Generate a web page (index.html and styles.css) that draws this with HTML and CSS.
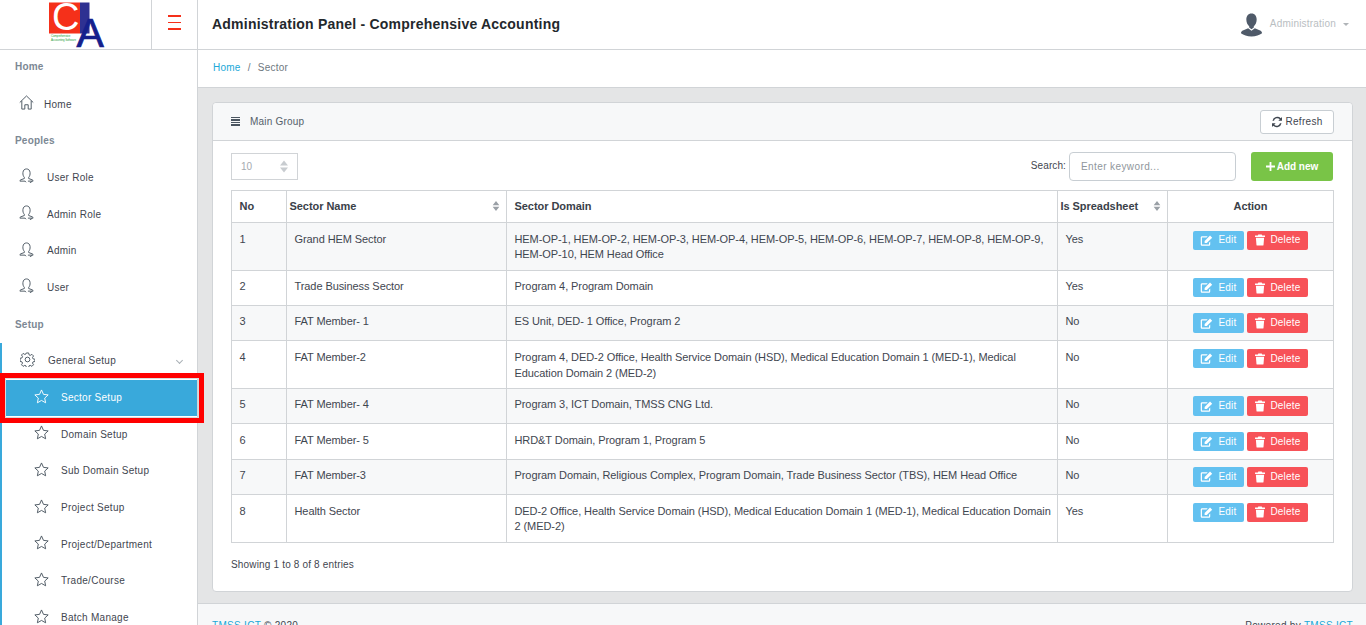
FILE: index.html
```html
<!DOCTYPE html>
<html lang="en">
<head>
  <meta charset="UTF-8" />
  <meta name="viewport" content="width=device-width, initial-scale=1.0" />
  <title>Administration Panel - Comprehensive Accounting</title>
  <link rel="stylesheet" href="styles.css">
</head>
<body>
  <svg class="sprites" width="0" height="0">
    <symbol id="i-home" viewBox="0 0 16 16"><path d="M.8 8 8 1l7.200 7M3 6.200V15h3.200v-4.600h3.600V15H13V6.200" fill="none" stroke="currentColor" stroke-width="1"/></symbol>
    <symbol id="i-user" viewBox="0 0 16 16"><path d="M5.700 10C4.500 8.700 4 7 4.200 4.800 4.400 2.300 6 1 8 1s3.600 1.300 3.800 3.800C12 7 11.500 8.700 10.300 10v1.200l4 1.500c.5.200.7.500.7 1.300H9.500M5.700 10v1.200l-4 1.500c-.5.200-.7.500-.7 1.300h5.500l1 1.200" fill="none" stroke="currentColor" stroke-width="1"/><path d="m11.500 15.800 2.500-1.500" fill="none" stroke="currentColor" stroke-width="1"/></symbol>
    <symbol id="i-gear" viewBox="0 0 16 16"><circle cx="8" cy="8" r="2.500" fill="none" stroke="currentColor"/><path d="M6.800 1h2.400l.4 2 1.300.6 1.800-1.100 1.700 1.700-1.100 1.800.6 1.300 2 .4v2.400l-2 .4-.6 1.300 1.100 1.800-1.700 1.700-1.800-1.100-1.300.6-.4 2H6.800l-.4-2-1.300-.6-1.800 1.100-1.700-1.700 1.100-1.800-.6-1.300-2-.4V6.700l2-.4.6-1.300-1.100-1.800 1.700-1.700 1.800 1.100 1.300-.6z" fill="none" stroke="currentColor"/></symbol>
    <symbol id="i-star" viewBox="0 0 16 16"><path d="m8 1 2.100 4.700 5 .6-3.700 3.400 1 5L8 12.200l-4.400 2.500 1-5L.9 6.300l5-.6z" fill="none" stroke="currentColor" stroke-width="1"/></symbol>
    <symbol id="i-edit" viewBox="0 0 14 14"><path d="M11 8v3.200c0 .9-.6 1.500-1.500 1.500H2.300c-.9 0-1.500-.6-1.500-1.500V4c0-.9.6-1.500 1.500-1.500h6L7 3.800H2.300l-.2.200v7.200l.2.200h7.200l.2-.2V9.300z" fill="currentColor"/><path d="M5 7.500 10.800 1.700l2.300 2.300-5.800 5.800H5z" fill="currentColor"/></symbol>
    <symbol id="i-trash" viewBox="0 0 14 14"><path d="M5 .5h4l.6 1.300h3.200v1.700H1.200V1.800h3.200zM2.200 4.500h9.600l-.7 8.200c0 .5-.4.8-.9.800H3.800c-.5 0-.9-.3-.9-.8z" fill="currentColor"/></symbol>
    <symbol id="i-refresh" viewBox="0 0 14 14"><path d="M12.800 1.200v4.200H8.600l1.600-1.600A4 4 0 0 0 3.500 5.500H1.700a5.800 5.800 0 0 1 9.700-3zM1.200 12.800V8.600h4.200l-1.600 1.600a4 4 0 0 0 6.700-1.700h1.800a5.800 5.800 0 0 1-9.700 3z" fill="currentColor"/></symbol>
    <symbol id="i-sort" viewBox="0 0 8 12"><path d="M4 0 8 5H0zM4 12 0 7h8z" fill="currentColor"/></symbol>
    <symbol id="i-plus" viewBox="0 0 10 10"><path d="M4 0h2v4h4v2H6v4H4V6H0V4h4z" fill="currentColor"/></symbol>
  </svg>

  <div class="app">
    <header class="topbar">
      <div class="brand">
        <svg class="logo" width="56" height="48" viewBox="0 0 56 48">
          <rect x="0" y="2.500" width="31" height="31" fill="#f5301a"/>
          <rect x="31" y="2.500" width="9.500" height="31" fill="#2e3192"/>
          <text x="3" y="30" class="logo-c">C</text>
          <text x="27.500" y="46.500" class="logo-a">A</text>
          <text x="2" y="37" class="logo-small">Comprehensive</text>
          <text x="2" y="41" class="logo-small">Accounting Software</text>
        </svg>
      </div>
      <button class="burger"><span></span><span></span><span></span></button>
      <div class="page-title">Administration Panel - Comprehensive Accounting</div>
      <div class="account">
        <svg class="avatar" width="23" height="24" viewBox="0 0 24 24">
          <path d="M12 0c3.600 0 5.400 2.800 5.400 6.200 0 3-1.200 5.800-3 7v1.300l-2.400 2-2.400-2v-1.300c-1.800-1.200-3-4-3-7C6.600 2.800 8.400 0 12 0z" fill="#4f5a69"/>
          <path d="M8.500 15.500 12 18l3.500-2.500 5.500 2.300c1.600.7 2 2.200 2 2.800-2.600 2-6.400 3.400-11 3.400S3.600 22.600 1 20.600c0-.6.400-2.100 2-2.800z" fill="#4f5a69"/>
        </svg>
        <span class="account-name">Administration</span>
        <span class="caret"></span>
      </div>
    </header>

    <div class="columns">
      <nav class="sidebar">
        <div class="nav-title">Home</div>
        <a class="nav-link"><svg class="nav-icon"><use href="#i-home"/></svg><span class="home-label">Home</span></a>
        <div class="nav-title">Peoples</div>
        <a class="nav-link"><svg class="nav-icon"><use href="#i-user"/></svg>User Role</a>
        <a class="nav-link"><svg class="nav-icon"><use href="#i-user"/></svg>Admin Role</a>
        <a class="nav-link"><svg class="nav-icon"><use href="#i-user"/></svg>Admin</a>
        <a class="nav-link"><svg class="nav-icon"><use href="#i-user"/></svg>User</a>
        <div class="nav-title">Setup</div>
        <div class="nav-group">
          <a class="nav-link"><svg class="nav-icon"><use href="#i-gear"/></svg>General Setup<span class="chevron"></span></a>
          <a class="nav-link sub active"><svg class="nav-icon"><use href="#i-star"/></svg>Sector Setup</a>
          <a class="nav-link sub"><svg class="nav-icon"><use href="#i-star"/></svg>Domain Setup</a>
          <a class="nav-link sub"><svg class="nav-icon"><use href="#i-star"/></svg>Sub Domain Setup</a>
          <a class="nav-link sub"><svg class="nav-icon"><use href="#i-star"/></svg>Project Setup</a>
          <a class="nav-link sub"><svg class="nav-icon"><use href="#i-star"/></svg>Project/Department</a>
          <a class="nav-link sub"><svg class="nav-icon"><use href="#i-star"/></svg>Trade/Course</a>
          <a class="nav-link sub"><svg class="nav-icon"><use href="#i-star"/></svg>Batch Manage</a>
        </div>
      </nav>

      <main class="main">
        <div class="breadcrumb"><a>Home</a><span class="sep">/</span><span>Sector</span></div>

        <div class="content">
          <section class="card">
            <div class="card-header">
              <span class="bars"></span>
              <span>Main Group</span>
              <button class="btn-refresh"><svg class="icon-13"><use href="#i-refresh"/></svg>Refresh</button>
            </div>
            <div class="card-body">
              <div class="controls">
                <div class="page-size">10<svg class="size-sort"><use href="#i-sort"/></svg></div>
                <label class="search-label">Search:</label>
                <input class="search" type="text" placeholder="Enter keyword..." />
                <button class="btn-add"><svg class="icon-plus"><use href="#i-plus"/></svg>Add new</button>
              </div>

              <table class="grid">
                <colgroup>
                  <col class="c-no"><col class="c-name"><col class="c-domain"><col class="c-sheet"><col class="c-action">
                </colgroup>
                <thead>
                  <tr>
                    <th>No</th>
                    <th class="tight">Sector Name<svg class="sort"><use href="#i-sort"/></svg></th>
                    <th>Sector Domain</th>
                    <th class="tight">Is Spreadsheet<svg class="sort"><use href="#i-sort"/></svg></th>
                    <th class="center">Action</th>
                  </tr>
                </thead>
                <tbody>
                  <tr>
                    <td>1</td><td>Grand HEM Sector</td>
                    <td>HEM-OP-1, HEM-OP-2, HEM-OP-3, HEM-OP-4, HEM-OP-5, HEM-OP-6, HEM-OP-7, HEM-OP-8, HEM-OP-9, HEM-OP-10, HEM Head Office</td>
                    <td>Yes</td>
                    <td class="actions"><a class="btn edit"><svg class="icon-edit"><use href="#i-edit"/></svg>Edit</a><a class="btn del"><svg class="icon-del"><use href="#i-trash"/></svg>Delete</a></td>
                  </tr>
                  <tr>
                    <td>2</td><td>Trade Business Sector</td>
                    <td>Program 4, Program Domain</td>
                    <td>Yes</td>
                    <td class="actions"><a class="btn edit"><svg class="icon-edit"><use href="#i-edit"/></svg>Edit</a><a class="btn del"><svg class="icon-del"><use href="#i-trash"/></svg>Delete</a></td>
                  </tr>
                  <tr>
                    <td>3</td><td>FAT Member- 1</td>
                    <td>ES Unit, DED- 1 Office, Program 2</td>
                    <td>No</td>
                    <td class="actions"><a class="btn edit"><svg class="icon-edit"><use href="#i-edit"/></svg>Edit</a><a class="btn del"><svg class="icon-del"><use href="#i-trash"/></svg>Delete</a></td>
                  </tr>
                  <tr>
                    <td>4</td><td>FAT Member-2</td>
                    <td>Program 4, DED-2 Office, Health Service Domain (HSD), Medical Education Domain 1 (MED-1), Medical Education Domain 2 (MED-2)</td>
                    <td>No</td>
                    <td class="actions"><a class="btn edit"><svg class="icon-edit"><use href="#i-edit"/></svg>Edit</a><a class="btn del"><svg class="icon-del"><use href="#i-trash"/></svg>Delete</a></td>
                  </tr>
                  <tr>
                    <td>5</td><td>FAT Member- 4</td>
                    <td>Program 3, ICT Domain, TMSS CNG Ltd.</td>
                    <td>No</td>
                    <td class="actions"><a class="btn edit"><svg class="icon-edit"><use href="#i-edit"/></svg>Edit</a><a class="btn del"><svg class="icon-del"><use href="#i-trash"/></svg>Delete</a></td>
                  </tr>
                  <tr>
                    <td>6</td><td>FAT Member- 5</td>
                    <td>HRD&amp;T Domain, Program 1, Program 5</td>
                    <td>No</td>
                    <td class="actions"><a class="btn edit"><svg class="icon-edit"><use href="#i-edit"/></svg>Edit</a><a class="btn del"><svg class="icon-del"><use href="#i-trash"/></svg>Delete</a></td>
                  </tr>
                  <tr>
                    <td>7</td><td>FAT Member-3</td>
                    <td>Program Domain, Religious Complex, Program Domain, Trade Business Sector (TBS), HEM Head Office</td>
                    <td>No</td>
                    <td class="actions"><a class="btn edit"><svg class="icon-edit"><use href="#i-edit"/></svg>Edit</a><a class="btn del"><svg class="icon-del"><use href="#i-trash"/></svg>Delete</a></td>
                  </tr>
                  <tr>
                    <td>8</td><td>Health Sector</td>
                    <td>DED-2 Office, Health Service Domain (HSD), Medical Education Domain 1 (MED-1), Medical Education Domain 2 (MED-2)</td>
                    <td>Yes</td>
                    <td class="actions"><a class="btn edit"><svg class="icon-edit"><use href="#i-edit"/></svg>Edit</a><a class="btn del"><svg class="icon-del"><use href="#i-trash"/></svg>Delete</a></td>
                  </tr>
                </tbody>
              </table>

              <div class="table-info">Showing 1 to 8 of 8 entries</div>
            </div>
          </section>
        </div>

        <footer class="footer">
          <div><a>TMSS ICT</a> © 2020</div>
          <div>Powered by <a>TMSS ICT</a></div>
        </footer>
      </main>
    </div>
  </div>

  <div class="highlight"></div>
</body>
</html>
```

FILE: styles.css
```css
* {
  box-sizing: border-box;
}
html, body {
  height: 100%;
}
body {
  margin: 0;
  overflow: hidden;
  font-family: "Liberation Sans", Arial, sans-serif;
  font-size: 11px;
  line-height: 16px;
  letter-spacing: -0.08px;
  color: #3f4650;
  background: #e4e5e6;
}
a {
  color: #20a8d8;
}
.sprites {
  position: absolute;
}
.app {
  height: 100%;
  display: flex;
  flex-direction: column;
}

/* top bar */
.topbar {
  height: 50px;
  flex: none;
  display: flex;
  align-items: center;
  background: #fff;
  border-bottom: 1px solid #d1d4d7;
}
.brand {
  width: 152px;
  height: 49px;
  padding-left: 49px;
  border-right: 1px solid #d1d4d7;
}
.logo {
  display: block;
}
.logo-c {
  font: 38px "Liberation Sans", sans-serif;
  fill: #fff;
}
.logo-a {
  font: 41px "Liberation Sans", sans-serif;
  fill: #15208c;
  stroke: #15208c;
  stroke-width: 0.7px;
}
.logo-small {
  font: 2.900px "Liberation Sans", sans-serif;
  fill: #1f9d3a;
}
.burger {
  width: 46px;
  height: 49px;
  flex: none;
  padding: 0 0 4px;
  display: flex;
  flex-direction: column;
  align-items: center;
  justify-content: center;
  gap: 5px;
  background: none;
  border: 0;
  border-right: 1px solid #d1d4d7;
}
.burger span {
  width: 13px;
  height: 1.500px;
  background: #f5301a;
}
.page-title {
  padding-left: 14px;
  margin-top: -1px;
  font-size: 14px;
  font-weight: 700;
  letter-spacing: 0.22px;
  color: #23282c;
}
.account {
  margin-left: auto;
  padding-right: 17px;
  display: flex;
  align-items: center;
  color: #b9bec2;
  font-size: 10px;
  letter-spacing: 0.2px;
}
.avatar {
  margin-right: 7px;
}
.account-name {
  margin-top: -2px;
}
.caret {
  margin-left: 7px;
  border: 3px solid transparent;
  border-top: 3px solid #b0b4b8;
  border-bottom: 0;
}

.columns {
  flex: 1;
  min-height: 0;
  display: flex;
}

/* sidebar */
.sidebar {
  width: 198px;
  flex: none;
  overflow: hidden;
  background: #fff;
  border-right: 1px solid #d1d4d7;
}
.nav-title {
  height: 36.700px;
  padding-left: 15px;
  display: flex;
  align-items: center;
  font-size: 10px;
  font-weight: 700;
  letter-spacing: 0.2px;
  color: #7c8894;
}
.nav-title:first-child {
  height: 36.200px;
  padding-bottom: 1.500px;
}
.nav-link {
  height: 36.700px;
  padding-left: 19px;
  display: flex;
  align-items: center;
  font-size: 10px;
  letter-spacing: 0.27px;
  color: #3f4650;
}
.nav-icon {
  width: 15px;
  height: 15px;
  margin-top: -4px;
  margin-right: 13px;
  flex: none;
  color: #4a5560;
}
.home-label {
  margin-left: -3px;
}
.nav-group {
  border-left: 2px solid #39a9db;
}
.nav-group .nav-link {
  padding-left: 18px;
}
.nav-group .nav-link.sub {
  padding-left: 32px;
}
.nav-link.sub .nav-icon {
  margin-right: 12px;
}
.nav-link.active {
  margin-left: 3px;
  padding-left: 29px !important;
  color: #fff;
  background: #39a9db;
}
.active .nav-icon {
  color: #fff;
}
.chevron {
  width: 5px;
  height: 5px;
  margin-left: auto;
  margin-right: 15px;
  margin-top: -2px;
  border-right: 1px solid #a9b0b6;
  border-bottom: 1px solid #a9b0b6;
  transform: rotate(45deg);
}

/* red annotation over the active menu item */
.highlight {
  position: absolute;
  left: 0;
  top: 373px;
  width: 204px;
  height: 50px;
  border: 5px solid #f00;
  box-shadow: inset 0 0 0 1px #d8dadc;
}

/* main column */
.main {
  flex: 1;
  min-width: 0;
  display: flex;
  flex-direction: column;
}
.breadcrumb {
  height: 38px;
  flex: none;
  padding: 0 0 2px 15px;
  display: flex;
  align-items: center;
  font-size: 10px;
  letter-spacing: 0.25px;
  color: #6f7880;
  background: #fff;
  border-bottom: 1px solid #d1d4d7;
}
.sep {
  margin: 0 7px;
}
.content {
  height: 515px;
  flex: none;
  padding: 14px 13px 0 14px;
}
.card {
  height: 490px;
  background: #fff;
  border: 1px solid #d1d4d7;
  border-radius: 4px;
}
.card-header {
  height: 38px;
  padding: 0 18px 0 18px;
  display: flex;
  align-items: center;
  font-size: 10px;
  letter-spacing: 0.2px;
  color: #55606a;
  background: #f7f8f9;
  border-bottom: 1px solid #d1d4d7;
  border-radius: 4px 4px 0 0;
}
.bars {
  width: 9px;
  height: 9px;
  margin-right: 10px;
  background: repeating-linear-gradient(#4a5560 0 1.500px, #f7f8f9 1.500px 2.500px);
}
.btn-refresh {
  margin-left: auto;
  width: 74px;
  height: 24px;
  padding: 0;
  display: flex;
  align-items: center;
  justify-content: center;
  gap: 2px;
  font: inherit;
  letter-spacing: 0.3px;
  color: #3f4650;
  background: #fff;
  border: 1px solid #c8ced3;
  border-radius: 3px;
}
.icon-13 {
  width: 12px;
  height: 12px;
}
.card-body {
  padding: 11px 19px 0 18px;
}
.controls {
  height: 38px;
  display: flex;
  align-items: flex-start;
}
.page-size {
  width: 67px;
  height: 27px;
  margin-top: 1px;
  padding: 0 10px 0 9px;
  display: flex;
  align-items: center;
  justify-content: space-between;
  font-size: 10px;
  color: #a5aab0;
  border: 1px solid #d1d4d7;
}
.size-sort {
  width: 8px;
  height: 13px;
  margin-right: -1px;
  color: #c8ccd0;
}
.search-label {
  margin-left: auto;
  margin-right: 3px;
  margin-top: 6px;
  font-size: 10px;
  letter-spacing: 0.1px;
}
.search {
  width: 167px;
  height: 29px;
  padding: 0 11px;
  font: inherit;
  font-size: 10px;
  letter-spacing: 0.4px;
  background: #fff;
  border: 1px solid #c8ced3;
  border-radius: 4px;
  outline: 0;
}
.search::placeholder {
  color: #8f969c;
}
.btn-add {
  width: 82px;
  height: 29px;
  margin-left: 15px;
  padding: 0;
  display: flex;
  align-items: center;
  justify-content: center;
  font: inherit;
  font-size: 10px;
  font-weight: 700;
  color: #fff;
  background: #79c447;
  border: 0;
  border-radius: 3px;
}
.icon-plus {
  width: 9px;
  height: 9px;
  margin-right: 2px;
}

/* table */
.grid {
  width: 1102px;
  table-layout: fixed;
  border-collapse: collapse;
}
.c-no { width: 55px; }
.c-name { width: 220px; }
.c-domain { width: 551px; }
.c-sheet { width: 110px; }
.c-action { width: 166px; }
.grid th, .grid td {
  border: 1px solid #d1d4d7;
  padding: 8.500px 4px 6.500px 7.500px;
  line-height: 15.800px;
  text-align: left;
  vertical-align: top;
}
.grid th {
  position: relative;
  height: 32px;
  padding-top: 7.500px;
  padding-bottom: 7px;
  font-weight: 700;
  letter-spacing: -0.05px;
  color: #3a4149;
}
.grid th.tight {
  padding-left: 2.500px;
}
.grid th.center {
  padding-right: 7.500px;
  text-align: center;
}
.sort {
  position: absolute;
  right: 6px;
  top: 9.500px;
  width: 8px;
  height: 10px;
  color: #9aa0a6;
}
.grid tbody tr:nth-child(odd) {
  background: #f7f8f9;
}
.grid td.actions {
  padding: 7.500px;
  text-align: center;
  white-space: nowrap;
  font-size: 0;
}
.btn {
  display: inline-flex;
  align-items: center;
  justify-content: center;
  height: 19.400px;
  border-radius: 2px;
  font-size: 10px;
  letter-spacing: 0.2px;
  color: #fff;
  vertical-align: top;
}
.edit {
  width: 51px;
  margin-right: 3px;
  background: #63c1f0;
}
.del {
  width: 61px;
  background: #f75258;
}
.icon-edit {
  width: 13px;
  height: 13px;
  margin-right: 5px;
}
.icon-del {
  width: 12px;
  height: 12px;
  margin-right: 4px;
}
.table-info {
  margin-top: 14px;
  font-size: 10px;
  letter-spacing: 0.17px;
}

.footer {
  flex: 1;
  padding: 14px 13px 0 14px;
  display: flex;
  justify-content: space-between;
  font-size: 10px;
  letter-spacing: 0.3px;
  background: #f7f8f9;
  border-top: 1px solid #d1d4d7;
}
```
